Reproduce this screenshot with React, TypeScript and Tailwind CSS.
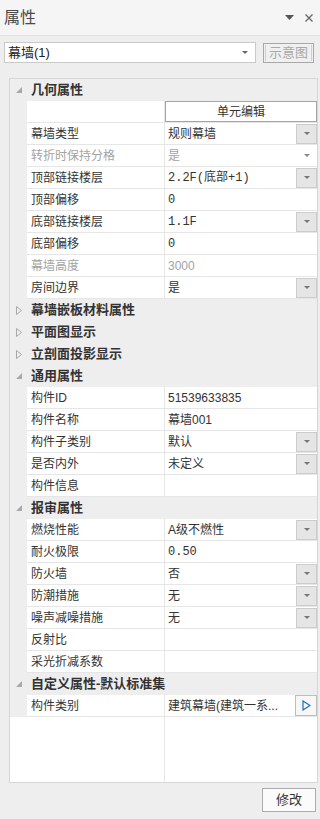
import React from "react";

const FONT = { fontFamily: '"Liberation Sans", "Noto Sans CJK SC", sans-serif' };
const MONO = { fontFamily: '"Liberation Mono", "Noto Sans CJK SC", monospace' };

type Row =
  | { kind: "group"; label: string; open: boolean }
  | {
      kind: "prop";
      name: string;
      value?: string;
      gray?: boolean;
      drop?: "box" | "arrow" | "more";
      mono?: boolean;
      button?: string;
    };

const rows: Row[] = [
  { kind: "group", label: "几何属性", open: true },
  { kind: "prop", name: "", button: "单元编辑" },
  { kind: "prop", name: "幕墙类型", value: "规则幕墙", drop: "box" },
  { kind: "prop", name: "转折时保持分格", value: "是", gray: true, drop: "arrow" },
  { kind: "prop", name: "顶部链接楼层", value: "2.2F(底部+1)", drop: "box", mono: true },
  { kind: "prop", name: "顶部偏移", value: "0", mono: true },
  { kind: "prop", name: "底部链接楼层", value: "1.1F", drop: "box", mono: true },
  { kind: "prop", name: "底部偏移", value: "0", mono: true },
  { kind: "prop", name: "幕墙高度", value: "3000", gray: true },
  { kind: "prop", name: "房间边界", value: "是", drop: "box" },
  { kind: "group", label: "幕墙嵌板材料属性", open: false },
  { kind: "group", label: "平面图显示", open: false },
  { kind: "group", label: "立剖面投影显示", open: false },
  { kind: "group", label: "通用属性", open: true },
  { kind: "prop", name: "构件ID", value: "51539633835" },
  { kind: "prop", name: "构件名称", value: "幕墙001" },
  { kind: "prop", name: "构件子类别", value: "默认", drop: "box" },
  { kind: "prop", name: "是否内外", value: "未定义", drop: "box" },
  { kind: "prop", name: "构件信息", value: "" },
  { kind: "group", label: "报审属性", open: true },
  { kind: "prop", name: "燃烧性能", value: "A级不燃性", drop: "box" },
  { kind: "prop", name: "耐火极限", value: "0.50", mono: true },
  { kind: "prop", name: "防火墙", value: "否", drop: "box" },
  { kind: "prop", name: "防潮措施", value: "无", drop: "box" },
  { kind: "prop", name: "噪声减噪措施", value: "无", drop: "box" },
  { kind: "prop", name: "反射比", value: "" },
  { kind: "prop", name: "采光折减系数", value: "" },
  { kind: "group", label: "自定义属性-默认标准集", open: true },
  { kind: "prop", name: "构件类别", value: "建筑幕墙(建筑一系...", drop: "more" },
];

function SmallArrow({ color = "#777" }: { color?: string }) {
  return (
    <svg width="6" height="4" viewBox="0 0 6 4">
      <path d="M0 0 H6 L3 3 Z" fill={color} />
    </svg>
  );
}

function GroupRow({ label, open }: { label: string; open: boolean }) {
  return (
    <div className="flex h-[22px] items-center bg-[#eeeeee]">
      <div className="flex w-[17px] justify-center pl-[1px]">
        {open ? (
          <svg width="6" height="6" viewBox="0 0 6 6">
            <path d="M6 0 V6 H0 Z" fill="#a8a8a8" />
          </svg>
        ) : (
          <svg width="6" height="9" viewBox="0 0 6 9">
            <path d="M0.5 0.5 L5.5 4.5 L0.5 8.5 Z" fill="none" stroke="#a8a8a8" strokeWidth="1" />
          </svg>
        )}
      </div>
      <span className="pl-[4px] text-[13px] font-bold text-[#333]">{label}</span>
    </div>
  );
}

function PropRow({ row }: { row: Extract<Row, { kind: "prop" }> }) {
  const textColor = row.gray ? "text-[#a3a3a3]" : "text-[#333]";
  return (
    <div className="flex h-[22px]">
      <div className="w-[17px] bg-[#eeeeee]" />
      <div className="flex w-[138px] items-center border-b border-r border-[#e6e6e6] bg-white pl-[4px]">
        <span className={`text-[12px] ${textColor}`}>{row.name}</span>
      </div>
      {row.button ? (
        <div className="flex-1 border-b border-[#e6e6e6] bg-white">
          <div className="flex h-[21px] items-center justify-center border border-[#a5a5a5] bg-white text-[12px] text-[#333]">
            {row.button}
          </div>
        </div>
      ) : (
        <div className="flex flex-1 items-center border-b border-[#e6e6e6] bg-white">
          <span
            className={`min-w-0 flex-1 truncate pl-[3px] text-[12px] ${textColor}`}
            style={row.mono ? MONO : undefined}
          >
            {row.value}
          </span>
          {row.drop === "box" && (
            <div className="flex h-[20px] w-[21px] items-center justify-center border border-[#cccccc] bg-[#e5e5e5]">
              <SmallArrow />
            </div>
          )}
          {row.drop === "arrow" && (
            <div className="flex h-[20px] w-[21px] items-center justify-center">
              <SmallArrow color="#888" />
            </div>
          )}
          {row.drop === "more" && (
            <div className="flex h-[21px] w-[22px] items-center justify-center border border-[#bdbdbd] bg-[#f7f7f7]">
              <svg width="9" height="11" viewBox="0 0 9 11">
                <path d="M1 1 L8 5.5 L1 10 Z" fill="none" stroke="#1b6fb8" strokeWidth="1.2" />
              </svg>
            </div>
          )}
        </div>
      )}
    </div>
  );
}

export default function App() {
  return (
    <div className="flex h-[819px] w-[320px] flex-col bg-[#eeeeee]" style={FONT}>
      <div className="flex h-[36px] items-center border-b border-[#e2e2e2] bg-[#f5f5f5] pl-[4px] pr-[7px]">
        <span className="text-[16px] text-[#4a4a4a]">属性</span>
        <div className="ml-auto flex items-center gap-[11px]">
          <svg width="9" height="5" viewBox="0 0 9 5">
            <path d="M0 0 H9 L4.5 5 Z" fill="#555" />
          </svg>
          <svg width="8" height="8" viewBox="0 0 8 8">
            <path d="M0.5 0.5 L7.5 7.5 M7.5 0.5 L0.5 7.5" stroke="#666" strokeWidth="1.3" />
          </svg>
        </div>
      </div>

      <div className="flex items-center pl-[4px] pt-[6px]">
        <div className="flex h-[21px] w-[252px] items-center border border-[#c9c9c9] bg-white pl-[3px] pr-[7px]">
          <span className="text-[13px] text-[#222]">幕墙(1)</span>
          <div className="ml-auto">
            <SmallArrow color="#666" />
          </div>
        </div>
        <div className="ml-[7px] flex h-[20px] w-[51px] items-center justify-center border border-[#a8a8a8] bg-[#f0f0f0] text-[13px] text-[#a8a8a8]">
          <div className="flex h-[16px] w-[47px] items-center justify-center border-x border-[#cfcfcf]">示意图</div>
        </div>
      </div>

      <div className="ml-[9px] mt-[15px] flex h-[705px] w-[309px] flex-col border border-[#d6d6d6] bg-white">
        {rows.map((r, i) =>
          r.kind === "group" ? (
            <GroupRow key={i} label={r.label} open={r.open} />
          ) : (
            <PropRow key={i} row={r} />
          )
        )}
        <div className="flex flex-1">
          <div className="w-[155px] border-r border-[#e6e6e6]" />
          <div className="flex-1" />
        </div>
      </div>

      <div className="flex justify-end pr-[4px] pt-[5px]">
        <div className="flex h-[24px] w-[54px] items-center justify-center border border-[#acacac] bg-[#fbfbfb] text-[13px] text-[#333]">
          修改
        </div>
      </div>
    </div>
  );
}
